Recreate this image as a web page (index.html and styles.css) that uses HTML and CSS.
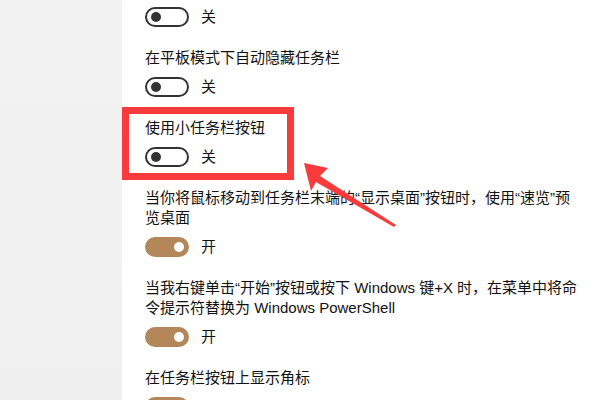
FILE: index.html
```html
<!DOCTYPE html>
<html lang="zh-CN">
<head>
    <meta charset="UTF-8">
    <title>任务栏</title>
    <link rel="stylesheet" href="styles.css">
</head>
<body>
    <div class="sidebar"></div>

    <main class="settings">
        <div class="setting">
            <p class="setting-label">在桌面模式下自动隐藏任务栏</p>
            <div class="switch-row">
                <span class="switch"></span>
                <span class="switch-text">关</span>
            </div>
        </div>

        <div class="setting">
            <p class="setting-label">在平板模式下自动隐藏任务栏</p>
            <div class="switch-row">
                <span class="switch"></span>
                <span class="switch-text">关</span>
            </div>
        </div>

        <div class="setting">
            <p class="setting-label">使用小任务栏按钮</p>
            <div class="switch-row">
                <span class="switch"></span>
                <span class="switch-text">关</span>
            </div>
            <div class="highlight"></div>
        </div>

        <div class="setting">
            <p class="setting-label">当你将鼠标移动到任务栏末端的“显示桌面”按钮时，使用“速览”预览桌面</p>
            <div class="switch-row">
                <span class="switch on"></span>
                <span class="switch-text">开</span>
            </div>
        </div>

        <div class="setting">
            <p class="setting-label">当我右键单击“开始”按钮或按下 Windows 键+X 时，在菜单中将命令提示符替换为 Windows PowerShell</p>
            <div class="switch-row">
                <span class="switch on"></span>
                <span class="switch-text">开</span>
            </div>
        </div>

        <div class="setting">
            <p class="setting-label">在任务栏按钮上显示角标</p>
            <div class="switch-row">
                <span class="switch on"></span>
                <span class="switch-text">开</span>
            </div>
        </div>
    </main>

    <!-- annotation arrow -->
    <svg class="arrow" width="599" height="400" viewBox="0 0 599 400">
        <polygon points="304,163 328,168 320,176 396,225 394,227 316,182 311,191" fill="#f93b3d"/>
    </svg>
</body>
</html>
```

FILE: styles.css
```css
* {
    margin: 0;
    padding: 0;
    box-sizing: border-box;
}

html, body {
    height: 100%;
    overflow: hidden;
}

body {
    font-family: 'Liberation Sans', 'Noto Sans CJK SC', sans-serif;
    font-size: 15px;
    color: #111;
    background: #fff;
    display: flex;
}

.sidebar {
    width: 122px;
    flex-shrink: 0;
    background: linear-gradient(180deg, #f1f2f1 0%, #eeefee 100%);
}

.settings {
    padding-left: 23px;
    margin-top: -22px;
    width: 457px;
}

.setting {
    position: relative;
    margin-bottom: 21px;
}

.setting-label {
    line-height: 20px;
    margin-bottom: 9px;
}

.switch-row {
    display: flex;
    align-items: center;
    gap: 12px;
    height: 20px;
}

.switch {
    position: relative;
    width: 44px;
    height: 20px;
    border: 2px solid #333;
    border-radius: 10px;
    background: #fff;
}

.switch::after {
    content: '';
    position: absolute;
    left: 4px;
    top: 3px;
    width: 10px;
    height: 10px;
    border-radius: 50%;
    background: #333;
}

.switch.on {
    border-color: #b4875a;
    background: #b4875a;
}

.switch.on::after {
    left: 27px;
    background: #fff;
}

.switch-text {
    line-height: 20px;
}

.highlight {
    position: absolute;
    left: -23px;
    top: -11px;
    width: 172px;
    height: 73px;
    border: 7px solid #f93b3d;
}

.arrow {
    position: absolute;
    left: 0;
    top: 0;
}
```
